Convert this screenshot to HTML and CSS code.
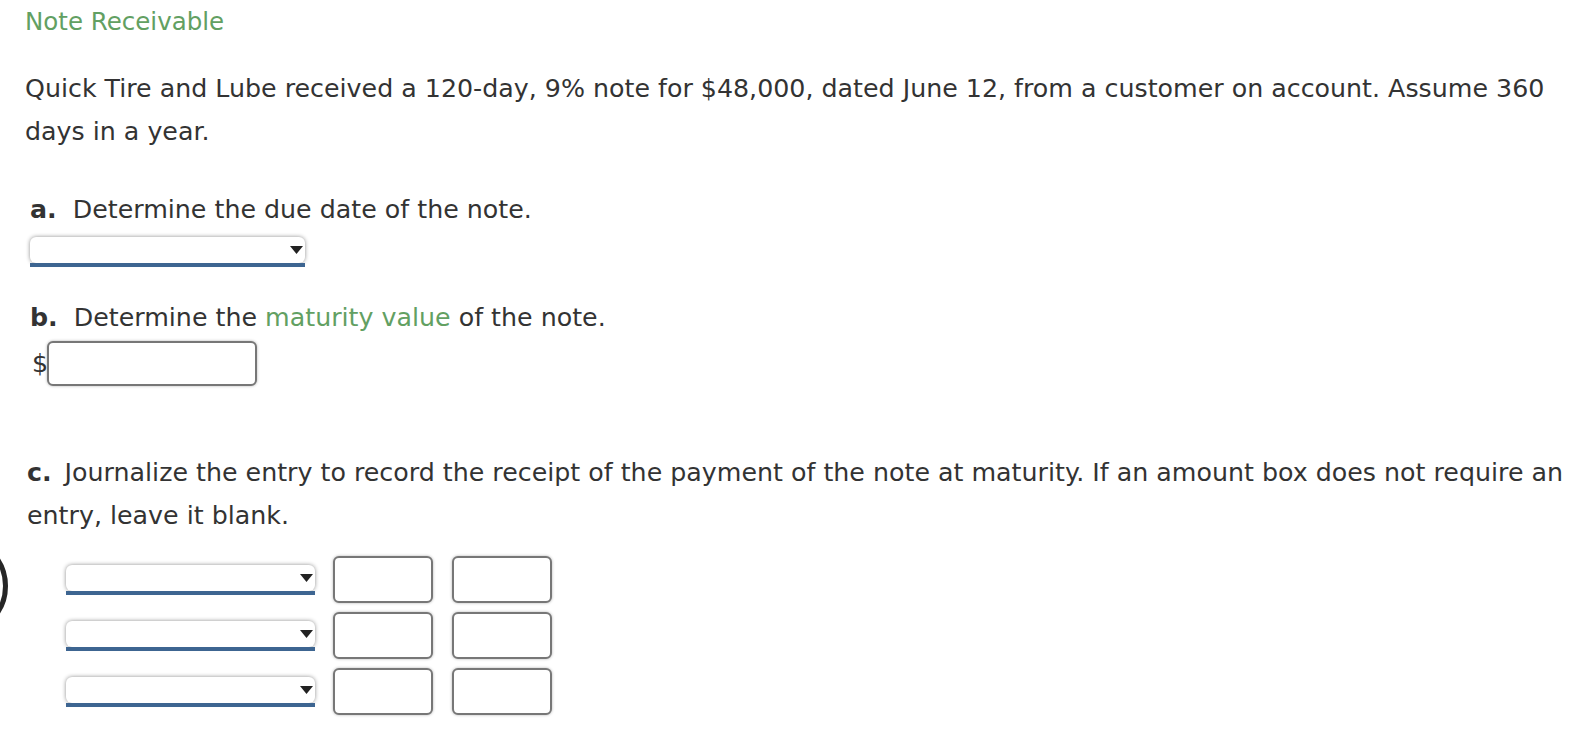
FILE: index.html
```html
<!DOCTYPE html>
<html lang="en">
<head>
<meta charset="utf-8">
<title>Note Receivable</title>
<link rel="stylesheet" href="styles.css">
</head>
<body>
<svg class="edge-arc" width="12" height="70" viewBox="0 0 12 70" aria-hidden="true">
  <circle cx="-43" cy="30" r="48.5" fill="none" stroke="#262626" stroke-width="5"/>
</svg>
<main class="page">
  <div class="title">Note Receivable</div>
  <p class="intro">Quick Tire and Lube received a 120-day, 9% note for $48,000, dated June 12, from a customer on account. Assume 360 days in a year.</p>

  <section class="part part-a">
    <p class="q"><b class="lbl lbl-a">a.</b>Determine the due date of the note.</p>
    <div class="dd dd-wide">
      <select class="dd-box" aria-label="Due date"><option></option></select>
      <svg class="dd-arrow" width="13" height="8" viewBox="0 0 13 8"><path d="M0 0H13L6.5 8Z" fill="#222"/></svg>
      <div class="dd-line"></div>
    </div>
  </section>

  <section class="part part-b">
    <p class="q"><b class="lbl lbl-b">b.</b>Determine the <span class="term">maturity value</span> of the note.</p>
    <div class="money">
      <span class="dollar">$</span>
      <input class="amount amount-b" type="text" aria-label="Maturity value">
    </div>
  </section>

  <section class="part part-c">
    <p class="q q-c"><b class="lbl lbl-c">c.</b>Journalize the entry to record the receipt of the payment of the note at maturity. If an amount box does not require an entry, leave it blank.</p>
    <div class="journal">
      <div class="jrow">
        <div class="dd dd-acct">
          <select class="dd-box" aria-label="Account"><option></option></select>
          <svg class="dd-arrow" width="13" height="8" viewBox="0 0 13 8"><path d="M0 0H13L6.5 8Z" fill="#222"/></svg>
          <div class="dd-line"></div>
        </div>
        <input class="amount amount-j" type="text" aria-label="Debit">
        <input class="amount amount-j" type="text" aria-label="Credit">
      </div>
      <div class="jrow">
        <div class="dd dd-acct">
          <select class="dd-box" aria-label="Account"><option></option></select>
          <svg class="dd-arrow" width="13" height="8" viewBox="0 0 13 8"><path d="M0 0H13L6.5 8Z" fill="#222"/></svg>
          <div class="dd-line"></div>
        </div>
        <input class="amount amount-j" type="text" aria-label="Debit">
        <input class="amount amount-j" type="text" aria-label="Credit">
      </div>
      <div class="jrow">
        <div class="dd dd-acct">
          <select class="dd-box" aria-label="Account"><option></option></select>
          <svg class="dd-arrow" width="13" height="8" viewBox="0 0 13 8"><path d="M0 0H13L6.5 8Z" fill="#222"/></svg>
          <div class="dd-line"></div>
        </div>
        <input class="amount amount-j" type="text" aria-label="Debit">
        <input class="amount amount-j" type="text" aria-label="Credit">
      </div>
    </div>
  </section>
</main>
</body>
</html>
```

FILE: styles.css
```css
* { box-sizing: border-box; }

html, body {
  margin: 0;
  padding: 0;
  background: #ffffff;
}

body {
  font-family: "DejaVu Sans", Verdana, sans-serif;
  font-size: 25.3px;
  color: #333333;
  position: relative;
  min-height: 736px;
  overflow: hidden;
}

.edge-arc {
  position: absolute;
  left: 0;
  top: 556px;
}

.page {
  padding-left: 25px;
}

.title {
  color: #62a062;
  font-size: 24.5px;
  line-height: 43px;
}

p {
  margin: 0;
}

.intro {
  margin-top: 24px;
  line-height: 43px;
}

.q {
  line-height: 43px;
}

.lbl {
  font-weight: bold;
}

.lbl-a, .lbl-b {
  margin-right: 16px;
}

.lbl-c {
  margin-right: 13px;
}

.term {
  color: #62a062;
}

.part-a {
  margin-top: 35px;
  padding-left: 5px;
}

.part-b {
  margin-top: 29px;
  padding-left: 5px;
}

.part-c {
  margin-top: 65px;
  padding-left: 2px;
}

/* dropdowns */
.dd {
  position: relative;
  display: flex;
  flex-direction: column;
}

.dd-wide {
  width: 275px;
  margin-top: 6px;
}

.dd-acct {
  width: 249px;
}

.dd-box {
  appearance: none;
  -webkit-appearance: none;
  display: block;
  width: 100%;
  height: 26px;
  border: none;
  border-radius: 6px;
  background: #ffffff;
  box-shadow: 0 0 4px rgba(0, 0, 0, 0.45);
  font: inherit;
  margin: 0;
  padding: 0;
}

.dd-arrow {
  position: absolute;
  right: 2px;
  top: 9px;
}

.dd-line {
  height: 4px;
  background: #3d6591;
}

/* amounts */
.money {
  display: flex;
  align-items: center;
  margin-top: 2px;
}

.dollar {
  margin-left: 2px;
  width: 15px;
}

.amount {
  border: 2px solid #777777;
  border-radius: 6px;
  background: #ffffff;
  box-shadow: 0 0 3px rgba(0, 0, 0, 0.3);
  font: inherit;
  padding: 0 6px;
  margin: 0;
  outline: none;
}

.amount-b {
  width: 210px;
  height: 45px;
}

.journal {
  margin-top: 19px;
  padding-left: 39px;
  display: flex;
  flex-direction: column;
  gap: 9px;
}

.jrow {
  display: flex;
  align-items: center;
  gap: 18px;
}

.amount-j {
  width: 100px;
  height: 47px;
}

.jrow .amount-j + .amount-j {
  margin-left: 1px;
}
```
